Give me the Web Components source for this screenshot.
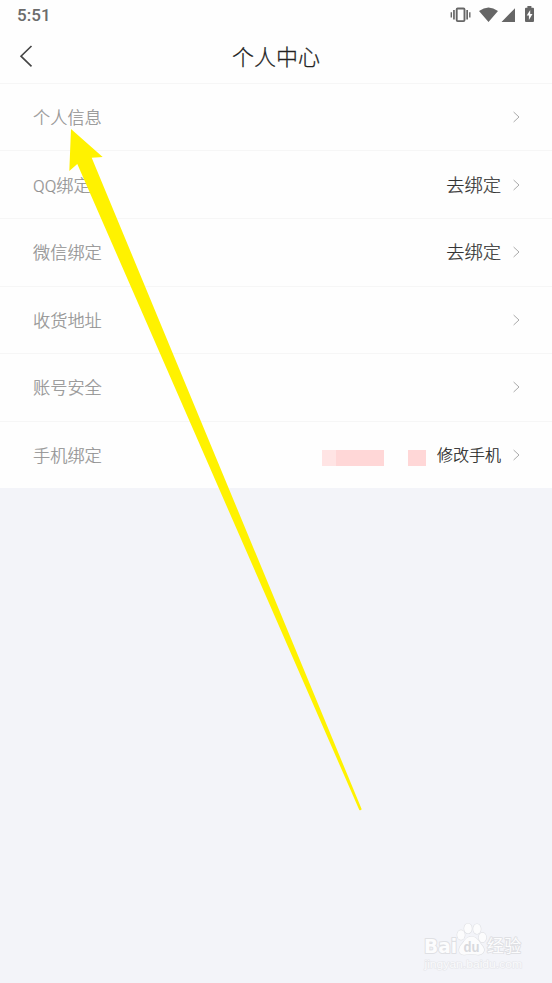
<!DOCTYPE html>
<html lang="zh-CN">
<head>
<meta charset="utf-8">
<title>个人中心</title>
<style>
html, body { margin: 0; height: 100%; }
body { font-family: Roboto, "Noto Sans CJK SC", sans-serif; background: #f3f4f9; }
</style>
</head>
<body>
<profile-page></profile-page>
<script>
function define(name, html) {
  const template = document.createElement('template');
  template.innerHTML = html;
  customElements.define(name, class extends HTMLElement {
    constructor() {
      super();
      this.attachShadow({ mode: 'open' }).append(template.content.cloneNode(true));
    }
  });
}

define('status-bar', `
<style>
:host { display: flex; height: 30px; box-sizing: border-box; padding: 0 17px; align-items: center; justify-content: space-between; color: #6b6b6b; }
time { font-size: 17px; line-height: 30px; font-weight: 500; letter-spacing: .1px; }
svg { display: block; margin-right: -1px; }
</style>
<time>5:51</time>
<svg width="86" height="30" viewBox="450 0 86 30" fill="#666">
  <rect x="456.7" y="8.5" width="7.8" height="12.6" rx="1" fill="none" stroke="#666" stroke-width="1.9"/>
  <path d="M453.1 10h1.7v9.5h-1.7zM450.6 12.2h1.4v5.2h-1.4zM466.3 10h1.7v9.5h-1.7zM469.1 12.2h1.4v5.2h-1.4z"/>
  <path d="M479 11Q488.5 3.8 498 11L488.5 22zM501.5 22L515 8.2V22z"/>
  <path fill-rule="evenodd" d="M527.4 6h4v1.7h1.6q1 0 1 1v12.3q0 1-1 1h-7q-1 0-1-1V8.7q0-1 1-1h1.4zM530.2 10l-3.5 5.6h2.2v4.5l3.6-6h-2.3z"/>
</svg>`);

define('nav-header', `
<style>
:host { display: grid; grid-template-columns: 52px 1fr 52px; height: 52.8px; align-items: center; }
h1 { margin: 0; font-size: 22px; font-weight: 300; -webkit-text-stroke: .25px; line-height: 50px; padding-top: 3px; text-align: center; color: #222; }
svg { display: block; }
</style>
<svg width="52" height="53" viewBox="0 30 52 53"><path d="M31.5 46L21 56.2L31.5 66.3" fill="none" stroke="#444" stroke-width="1.6"/></svg>
<h1><slot></slot></h1>`);

define('menu-row', `
<style>
:host { display: flex; height: 67.6px; box-sizing: border-box; padding: 0 32px 0 33px; align-items: center; border-top: 1px solid #f6f6f6; background: #fefefe; color: #333; font-weight: 300; -webkit-text-stroke: .22px; }
.label { flex: 1; font-size: 17.2px; line-height: 24px; padding-top: 2px; color: #929292; }
.value { display: flex; align-items: center; font-size: 18.3px; line-height: 26px; padding-top: 2px; margin-right: 12px; }
svg { display: block; }
</style>
<span class="label"><slot></slot></span>
<span class="value"><slot name="value"></slot></span>
<svg width="7" height="12" viewBox="0 0 7 12"><path d="M.6 1L6 6L.6 11" fill="none" stroke="#aaa" stroke-width="1"/></svg>`);

define('phone-value', `
<style>
:host { display: flex; align-items: center; font-size: 16px; line-height: 24px; color: #222; }
i { display: block; height: 16px; margin-top: 4px; background: #ffd7d7; }
.a { width: 14px; background: #ffe4e4; }
.b { width: 48px; margin-right: 24px; }
.c { width: 18px; margin-right: 11px; }
</style>
<i class="a"></i><i class="b"></i><i class="c"></i><slot></slot>`);

define('pointer-arrow', `
<style>
:host { position: absolute; inset: 0; pointer-events: none; }
svg { display: block; }
</style>
<svg width="552" height="983" viewBox="0 0 552 983">
  <path fill="#fff200" d="M71 129L102.7 157L91.7 157.7L361.7 809.2Q360.5 811 359.3 810L77.3 164L69.3 171z"/>
</svg>`);

define('site-watermark', `
<style>
:host { position: absolute; left: 410px; top: 910px; pointer-events: none; }
svg { display: block; font-family: "Liberation Sans", "Noto Sans CJK SC", sans-serif; }
</style>
<svg width="142" height="73" viewBox="410 910 142 73">
  <g fill="#fcfcfd" stroke="#dfe0e4" stroke-width="1.2" paint-order="stroke" stroke-linejoin="round">
    <text x="424" y="953" font-family="DejaVu Sans" font-size="19.5" font-weight="700" textLength="33" lengthAdjust="spacingAndGlyphs" stroke-width="2">Bai</text>
    <ellipse cx="461" cy="935" rx="3.8" ry="4.8"/><ellipse cx="468" cy="928.5" rx="3.8" ry="5"/>
    <ellipse cx="477" cy="929" rx="3.8" ry="5"/><ellipse cx="482.5" cy="937.5" rx="3.7" ry="4.8"/>
    <path d="M471.5 936.5C477 936.5 479 942 482 945.5C487 951 482 956 476 954.5Q471 953.8 466 954.5C459 956 457 950 461.5 944.5C464 942 466 936.5 471.5 936.5z"/>
    <text x="487" y="952" font-size="16.8" font-weight="400" textLength="34" stroke-width="1.8">经验</text>
    <text x="424.5" y="968" font-size="10.5" textLength="97.5" lengthAdjust="spacingAndGlyphs" fill="#fafafc" stroke="#e6e7eb" stroke-width="1.2">jingyan.baidu.com</text>
  </g>
  <text x="463.5" y="951.5" font-size="14" font-weight="700" textLength="16" lengthAdjust="spacingAndGlyphs" fill="#d8d9dd">du</text>
</svg>`);

define('profile-page', `
<style>
:host { display: block; position: relative; height: 983px; overflow: hidden; background: #f3f4f9; }
header { background: #fefefe; }
main { display: flex; flex-direction: column; }
</style>
<header><status-bar></status-bar><nav-header>个人中心</nav-header></header>
<main>
  <menu-row>个人信息</menu-row>
  <menu-row>QQ绑定<span slot="value">去绑定</span></menu-row>
  <menu-row>微信绑定<span slot="value">去绑定</span></menu-row>
  <menu-row>收货地址</menu-row>
  <menu-row>账号安全</menu-row>
  <menu-row>手机绑定<phone-value slot="value">修改手机</phone-value></menu-row>
</main>
<pointer-arrow></pointer-arrow>
<site-watermark></site-watermark>`);
</script>
</body>
</html>
